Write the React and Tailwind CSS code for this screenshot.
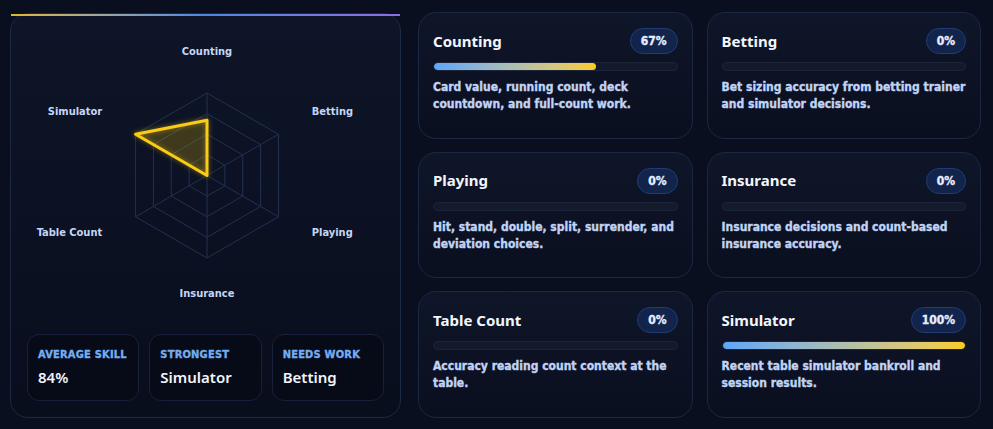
const skills = [
  { name: "Counting", value: 67, desc: "Card value, running count, deck countdown, and full-count work." },
  { name: "Betting", value: 0, desc: "Bet sizing accuracy from betting trainer and simulator decisions." },
  { name: "Playing", value: 0, desc: "Hit, stand, double, split, surrender, and deviation choices." },
  { name: "Insurance", value: 0, desc: "Insurance decisions and count-based insurance accuracy." },
  { name: "Table Count", value: 0, desc: "Accuracy reading count context at the table." },
  { name: "Simulator", value: 100, desc: "Recent table simulator bankroll and session results." },
];

// heavy condensed face for the small copy, a rounder one for headings
const body = {
  fontFamily: "'DejaVu Sans Condensed', 'DejaVu Sans', sans-serif",
  WebkitTextStroke: "0.35px currentColor",
};
const head = { fontFamily: "'Noto Sans', 'Open Sans', sans-serif" };

// radar geometry (panel coordinates)
const CX = 196;
const CY = 161.5;
const R = 82.5;
const LABEL_R = 121;

function point(i, r) {
  const a = (-90 + i * 60) * (Math.PI / 180);
  return [CX + r * Math.cos(a), CY + r * Math.sin(a)];
}

function hexPoints(r) {
  return [0, 1, 2, 3, 4, 5].map((i) => point(i, r).join(",")).join(" ");
}

function Radar() {
  // clockwise from the top
  const order = ["Counting", "Betting", "Playing", "Insurance", "Table Count", "Simulator"];
  const vals = order.map((n) => skills.find((s) => s.name === n).value);
  const shape = vals.map((v, i) => point(i, (R * v) / 100).join(",")).join(" ");

  return (
    <svg width="389" height="310" className="block">
      <defs>
        <filter id="glow" x="-30%" y="-30%" width="160%" height="160%">
          <feGaussianBlur stdDeviation="2.5" result="b" />
          <feComponentTransfer in="b" result="soft">
            <feFuncA type="linear" slope="0.5" />
          </feComponentTransfer>
          <feMerge>
            <feMergeNode in="soft" />
            <feMergeNode in="SourceGraphic" />
          </feMerge>
        </filter>
      </defs>
      {[0.25, 0.5, 0.75, 1].map((f) => (
        <polygon key={f} points={hexPoints(R * f)} fill="none" stroke="#223150" strokeWidth="1" />
      ))}
      {[0, 1, 2, 3, 4, 5].map((i) => {
        const [x, y] = point(i, R);
        return <line key={i} x1={CX} y1={CY} x2={x} y2={y} stroke="#223150" strokeWidth="1" />;
      })}
      <polygon
        points={shape}
        fill="rgba(250,204,21,0.15)"
        stroke="#facc15"
        strokeWidth="3"
        strokeLinejoin="round"
        filter="url(#glow)"
      />
      {order.map((n, i) => {
        const [x, y] = point(i, LABEL_R);
        const anchor = Math.abs(x - CX) < 1 ? "middle" : x > CX ? "start" : "end";
        return (
          <text key={n} x={x} y={y} textAnchor={anchor} fill="#c4d6f4" fontSize="11" fontWeight="700" style={body}>
            {n}
          </text>
        );
      })}
    </svg>
  );
}

function Stat({ label, value }) {
  return (
    <div className="rounded-[12px] border border-[#18213a] bg-[#070b18] px-[10px] pt-[13px] pb-[12px]">
      <div className="whitespace-nowrap text-[11px] font-bold uppercase leading-[13px] tracking-[0.02em] text-[#74aef0]" style={body}>
        {label}
      </div>
      <div className="mt-[5px] text-[15px] font-semibold leading-[22px] text-[#f1f5fb]" style={head}>
        {value}
      </div>
    </div>
  );
}

function SkillCard({ name, value, desc }) {
  return (
    <div className="rounded-[18px] border border-[#1a2843] bg-gradient-to-b from-[#0f1629] to-[#0a0f1f] px-[14px] pt-[15px]">
      <div className="flex items-center justify-between">
        <div className="text-[15px] font-bold text-[#f3f6fc]" style={head}>
          {name}
        </div>
        <div
          className="rounded-full border border-[#213c72] bg-[#12244b] px-[10px] py-[5px] text-[12px] font-bold leading-[14px] text-[#e6eeff]"
          style={body}
        >
          {value}%
        </div>
      </div>
      <div className="mt-[8px] h-[9px] overflow-hidden rounded-full border border-[#1c2538] bg-[#121a2b]">
        <div className="h-full rounded-full bg-gradient-to-r from-[#60a5fa] to-[#facc15]" style={{ width: `${value}%` }} />
      </div>
      <p className="mt-[8px] text-[12px] font-bold leading-[17px] text-[#c0d4f5]" style={body}>
        {desc}
      </p>
    </div>
  );
}

export default function App() {
  return (
    <div className="min-h-screen bg-[#0a0f1f] pl-[10px] pr-[12px] pt-[12px]">
      <div className="flex h-[406px]">
        <div className="relative mt-[1px] flex w-[391px] flex-col rounded-[18px] border border-[#1b2944] bg-gradient-to-b from-[#0e1528] to-[#090e1d]">
          <div className="absolute left-0 right-0 top-0 h-[2px] bg-gradient-to-r from-[#e2b716] via-[#4a86e6] to-[#8b6fe0]" />
          <Radar />
          <div className="mt-auto grid grid-cols-3 gap-[10px] px-[16px] pb-[16px]">
            <Stat label="Average Skill" value="84%" />
            <Stat label="Strongest" value="Simulator" />
            <Stat label="Needs Work" value="Betting" />
          </div>
        </div>
        <div className="ml-[17px] grid flex-1 grid-cols-2 grid-rows-3 gap-x-[14px] gap-y-[13px]">
          {skills.map((s) => (
            <SkillCard key={s.name} {...s} />
          ))}
        </div>
      </div>
    </div>
  );
}
